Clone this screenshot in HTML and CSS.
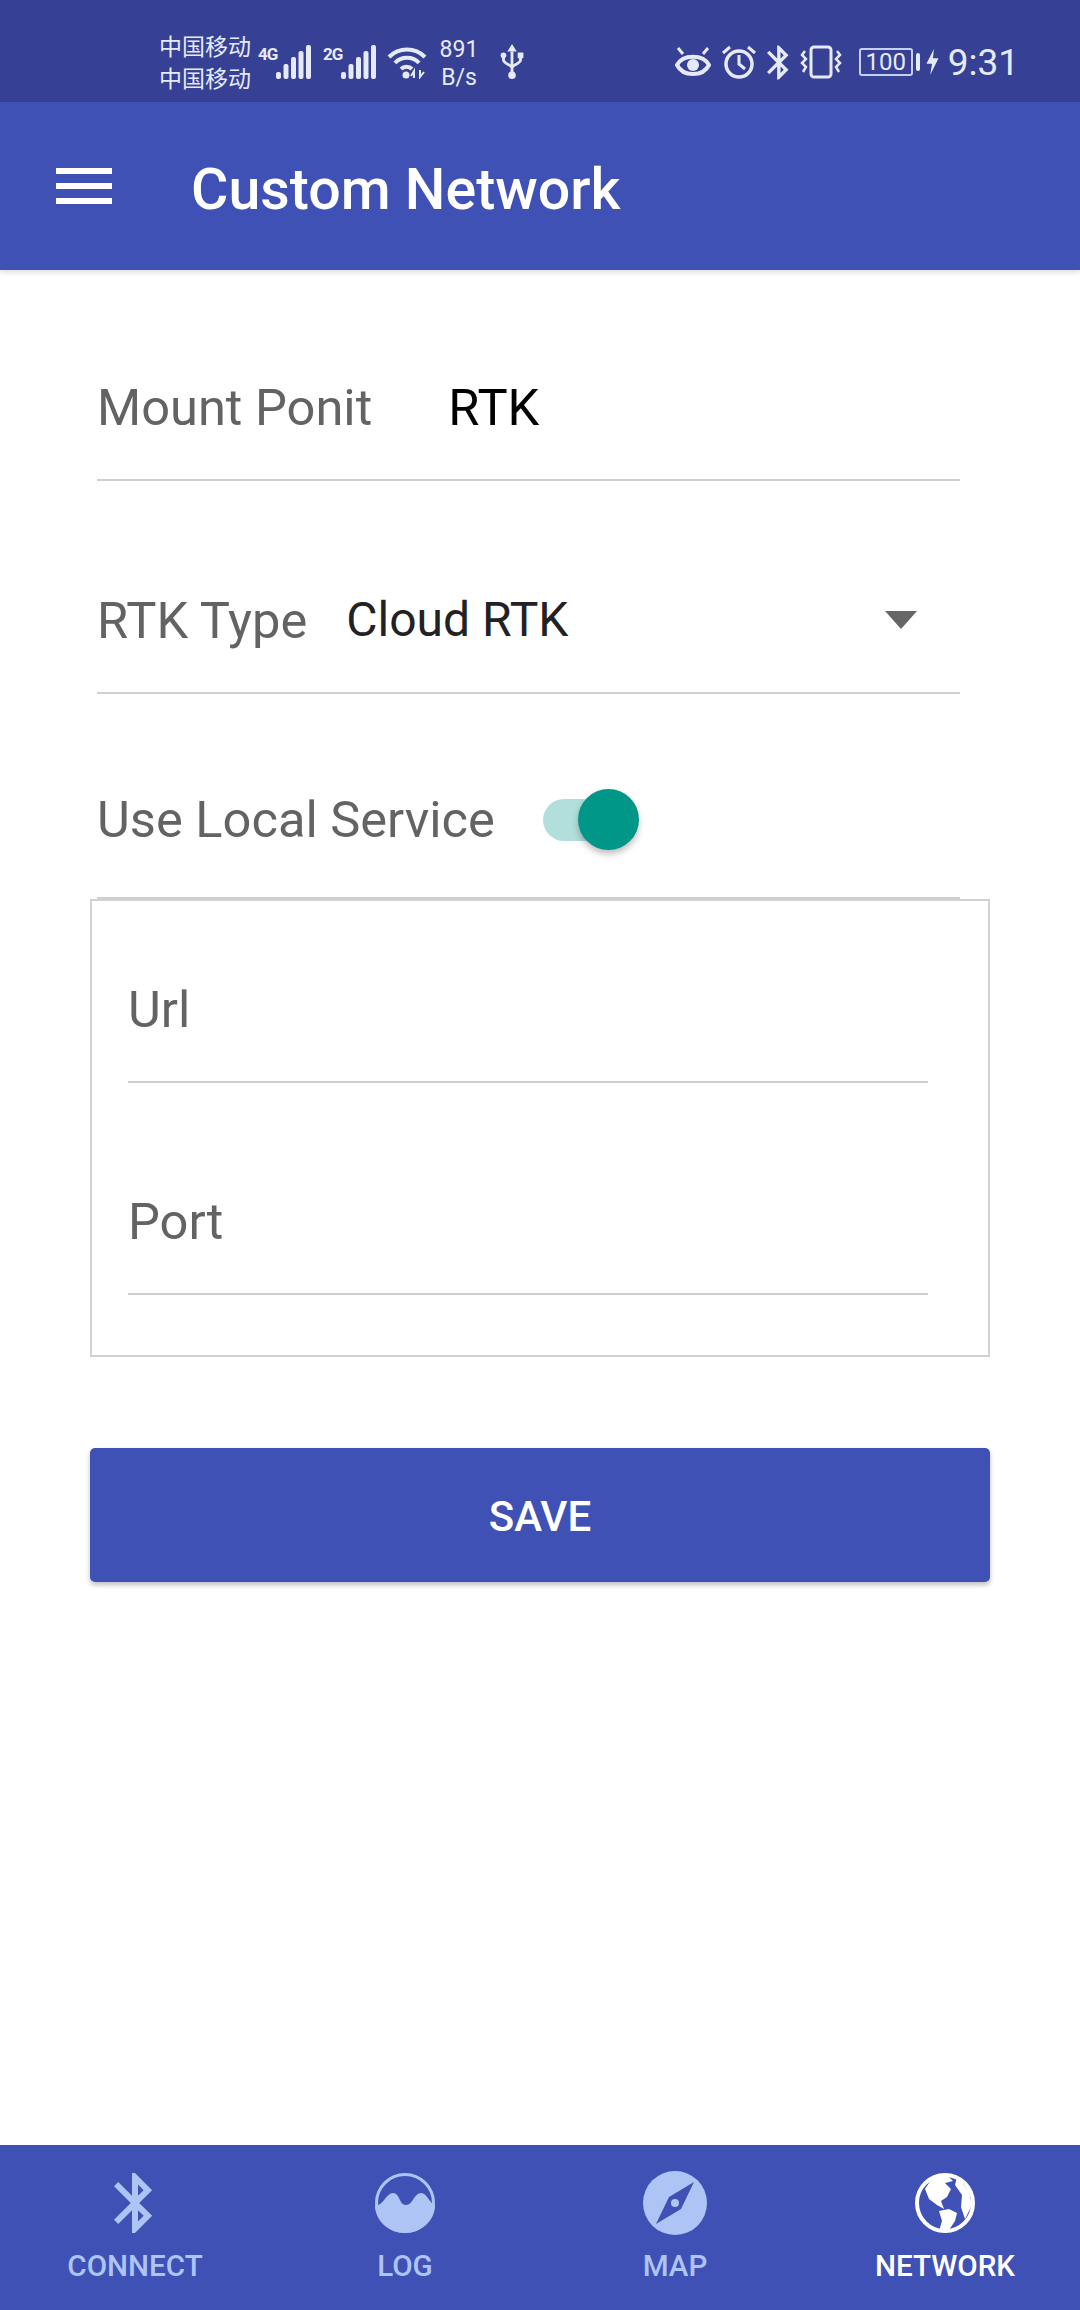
FILE: index.html
```html
<!DOCTYPE html>
<html lang="en">
<head>
    <meta charset="UTF-8">
    <meta name="viewport" content="width=device-width, initial-scale=1.0">
    <title>Custom Network</title>
    <link rel="stylesheet" href="styles.css">
</head>
<body>
    <div class="status-bar">
        <div class="status-left">
            <div class="carriers"><span>中国移动</span><span>中国移动</span></div>
            <div class="signal">
                <span class="net-type">4G</span>
                <svg width="36" height="34" viewBox="0 0 36 34" class="fill-icon"><rect x="0" y="27" width="5" height="7" rx="2"/><rect x="7.5" y="19" width="5" height="15" rx="2"/><rect x="15" y="12" width="5" height="22" rx="2"/><rect x="22.5" y="6" width="5" height="28" rx="2"/><rect x="30" y="0" width="5" height="34" rx="2"/></svg>
            </div>
            <div class="signal">
                <span class="net-type">2G</span>
                <svg width="36" height="34" viewBox="0 0 36 34" class="fill-icon"><rect x="0" y="27" width="5" height="7" rx="2"/><rect x="7.5" y="19" width="5" height="15" rx="2"/><rect x="15" y="12" width="5" height="22" rx="2"/><rect x="22.5" y="6" width="5" height="28" rx="2"/><rect x="30" y="0" width="5" height="34" rx="2"/></svg>
            </div>
            <svg class="wifi" width="40" height="34" viewBox="0 0 40 34" fill="none" stroke="#e6eaf8" stroke-width="4"><path d="M2 12C12 2 28 2 38 12"/><path d="M8 18C14 11 26 11 32 18"/><path d="M14 24C17 21 22 21 25 24"/><circle cx="19" cy="30" r="3.5" fill="#e6eaf8" stroke="none"/><path d="M27 33V26L24 31M33 25V32L37 27" stroke-width="2"/></svg>
            <div class="speed"><span>891</span><span>B/s</span></div>
            <svg class="usb" width="24" height="36" viewBox="0 0 24 38" fill="none" stroke="#e6eaf8" stroke-width="3"><path d="M12 8V32"/><path d="M3 13V17C3 21 12 22 12 25"/><path d="M21 13V17C21 21 12 22 12 25"/><path d="M12 0L17 8H7Z" fill="#e6eaf8" stroke="none"/><circle cx="12" cy="33" r="4" fill="#e6eaf8" stroke="none"/><circle cx="3" cy="12" r="3" fill="#e6eaf8" stroke="none"/><rect x="18" y="9" width="6" height="6" fill="#e6eaf8" stroke="none"/></svg>
        </div>
        <div class="status-right">
            <svg width="36" height="34" viewBox="0 0 36 34" fill="none" stroke="#e6eaf8" stroke-width="4"><path d="M2 20C8 9 28 9 34 20C28 32 8 32 2 20Z"/><circle cx="18" cy="20" r="6" fill="#e6eaf8" stroke="none"/><path d="M3 3L8 9M33 3L28 9" stroke-width="3"/></svg>
            <svg width="34" height="34" viewBox="0 0 34 34" fill="none" stroke="#e6eaf8" stroke-width="3.5"><circle cx="17" cy="19" r="13"/><path d="M17 10V19L23 24" stroke-width="3"/><path d="M1 8L8 2M33 8L26 2" stroke-width="3"/></svg>
            <svg width="22" height="35" viewBox="5 2 13 20" class="fill-icon"><path d="M17.71 7.71L12 2h-1v7.59L6.41 5 5 6.41 10.59 12 5 17.59 6.41 19 11 14.41V22h1l5.71-5.71-4.3-4.29 4.3-4.29zM13 5.83l1.88 1.88L13 9.59V5.83zm1.88 10.46L13 18.17v-3.76l1.88 1.88z"/></svg>
            <svg width="42" height="34" viewBox="0 0 42 34" fill="none" stroke="#e6eaf8" stroke-width="3"><rect x="11" y="2" width="20" height="30" rx="3"/><path d="M5 6L2 10L6 14L2 18L6 22L3 27M37 6L40 10L36 14L40 18L36 22L39 27" stroke-width="2.5"/></svg>
            <div class="battery"><span class="battery-box">100</span><span class="battery-nub"></span></div>
            <svg class="bolt" width="13" height="26" viewBox="0 0 13 28"><path d="M8 0L0 16H6L4 28L13 10H7Z"/></svg>
            <span class="clock">9:31</span>
        </div>
    </div>

    <header class="app-bar">
        <div class="menu-btn"><span></span><span></span><span></span></div>
        <h1>Custom Network</h1>
    </header>

    <main class="form">
        <div class="field">
            <span class="label">Mount Ponit</span>
            <span class="value mount-value">RTK</span>
        </div>
        <div class="field">
            <span class="label">RTK Type</span>
            <span class="value select-value">Cloud RTK</span>
            <span class="arrow"></span>
        </div>
        <div class="field switch-field">
            <span class="label">Use Local Service</span>
            <span class="switch"><span class="track"></span><span class="thumb"></span></span>
        </div>
        <div class="service-box">
            <div class="field"><span class="label">Url</span></div>
            <div class="field"><span class="label">Port</span></div>
        </div>
        <button class="save-btn">SAVE</button>
    </main>

    <nav class="bottom-nav">
        <div class="nav-item">
            <svg width="72" height="72" viewBox="0 0 24 24" fill="#adc4f4"><path d="M17.71 7.71L12 2h-1v7.59L6.41 5 5 6.41 10.59 12 5 17.59 6.41 19 11 14.41V22h1l5.71-5.71-4.3-4.29 4.3-4.29zM13 5.83l1.88 1.88L13 9.59V5.83zm1.88 10.46L13 18.17v-3.76l1.88 1.88z"/></svg>
            <span>CONNECT</span>
        </div>
        <div class="nav-item">
            <svg width="72" height="72" viewBox="0 0 72 72"><circle cx="36" cy="36" r="28.5" fill="none" stroke="#adc4f4" stroke-width="3"/><path d="M6 38C14 40 17 26 24 26C31 26 30 38 37 38C44 38 45 26 52 26C58 26 60 36 66 38C66 54 52 66 36 66C20 66 6 54 6 38Z" fill="#adc4f4"/></svg>
            <span>LOG</span>
        </div>
        <div class="nav-item">
            <svg width="72" height="72" viewBox="0 0 72 72"><circle cx="36" cy="36" r="32" fill="#adc4f4"/><path d="M55 15L42 42L17 57L30 30Z" fill="#3f51b5"/><circle cx="36" cy="36" r="4" fill="#adc4f4"/></svg>
            <span>MAP</span>
        </div>
        <div class="nav-item active">
            <svg width="72" height="72" viewBox="0 0 72 72"><circle cx="36" cy="36" r="28" fill="none" stroke="#fff" stroke-width="4"/><path d="M24 10L38 8L44 14L36 16L42 22L38 30L32 34L35 42L28 38L20 32L16 22ZM48 10L60 24L63 38L56 52L52 40L53 28L46 18ZM30 44L40 42L48 46L46 54L38 66L30 64L33 54Z" fill="#fff"/></svg>
            <span>NETWORK</span>
        </div>
    </nav>
</body>
</html>
```

FILE: styles.css
```css
* {
    box-sizing: border-box;
}
body {
    font-family: Roboto, "Noto Sans CJK SC", sans-serif;
    margin: 0;
    padding: 0;
    width: 1080px;
    height: 2310px;
    display: flex;
    flex-direction: column;
    background-color: #fff;
    overflow: hidden;
}
.fill-icon, .bolt {
    fill: #e6eaf8;
}

/* status bar */
.status-bar {
    height: 102px;
    flex-shrink: 0;
    background-color: #364095;
    color: #e6eaf8;
    display: flex;
    justify-content: space-between;
    align-items: center;
    padding: 22px 61px 0 159px;
}
.status-left, .status-right {
    display: flex;
    align-items: center;
}
.status-right {
    gap: 11px;
}
.carriers, .speed {
    display: flex;
    flex-direction: column;
    margin-top: 4px;
    font-size: 23px;
    line-height: 32px;
}
.signal {
    display: flex;
    height: 34px;
    margin-left: 7px;
}
.signal + .signal {
    margin-left: 11px;
}
.net-type {
    width: 18px;
    font-size: 17px;
    font-weight: 700;
    line-height: 18px;
    letter-spacing: -1px;
}
.wifi {
    margin-left: 10px;
}
.speed {
    width: 40px;
    margin-left: 12px;
    align-items: center;
    font-size: 23px;
    line-height: 28px;
}
.usb {
    margin-left: 21px;
}
.battery {
    display: flex;
    align-items: center;
    margin-left: 6px;
}
.battery-box {
    width: 54px;
    height: 28px;
    border: 2px solid #c6d0f0;
    border-radius: 3px;
    font-size: 24px;
    line-height: 24px;
    text-align: center;
}
.battery-nub {
    width: 4px;
    height: 18px;
    margin-left: 3px;
    background-color: #e6eaf8;
    border-radius: 2px;
}
.bolt {
    margin-left: -5px;
}
.clock {
    font-size: 37px;
    margin-left: -2px;
}

/* app bar */
.app-bar {
    height: 168px;
    flex-shrink: 0;
    background-color: #3f51b5;
    color: #fff;
    display: flex;
    align-items: center;
    padding-left: 56px;
    box-shadow: 0 2px 6px rgba(0, 0, 0, 0.15);
}
.menu-btn {
    width: 56px;
    display: flex;
    flex-direction: column;
    gap: 9px;
}
.menu-btn span {
    height: 6px;
    background-color: #fff;
}
.app-bar h1 {
    margin: 6px 0 0 79px;
    font-size: 57.3px;
    font-weight: 500;
}

/* form */
.form {
    flex: 1;
    padding: 63px 90px 0;
}
.field {
    height: 148px;
    margin: 0 30px 65px 7px;
    padding-top: 2px;
    border-bottom: 2px solid #cfcfcf;
    display: flex;
    align-items: center;
    font-size: 50.6px;
}
.label {
    color: #636363;
}
.value {
    color: #222;
    font-size: 48px;
}
.mount-value {
    margin-left: 76px;
    color: #000;
    font-size: 50.6px;
}
.select-value {
    margin-left: 39px;
    margin-bottom: 2px;
}
.arrow {
    margin-left: auto;
    margin-right: 43px;
    border-left: 16px solid transparent;
    border-right: 16px solid transparent;
    border-top: 18px solid #666;
}
.switch-field {
    height: 151px;
    margin-top: -11px;
    margin-bottom: 0;
    padding-top: 0;
    padding-bottom: 6px;
}
.switch {
    position: relative;
    width: 96px;
    height: 61px;
    margin-left: 48px;
}
.track {
    position: absolute;
    left: 0;
    top: 10px;
    width: 66px;
    height: 42px;
    border-radius: 21px;
    background-color: #b2dfdb;
}
.thumb {
    position: absolute;
    right: 0;
    top: 0;
    width: 61px;
    height: 61px;
    border-radius: 50%;
    background-color: #009688;
    box-shadow: 0 4px 6px rgba(0, 0, 0, 0.25);
}
.service-box {
    height: 458px;
    border: 2px solid #d2d2d2;
    padding-top: 34px;
}
.service-box .field {
    margin: 0 60px 64px 36px;
}
.save-btn {
    display: block;
    width: 100%;
    height: 134px;
    margin-top: 91px;
    padding-top: 3px;
    border: none;
    border-radius: 5px;
    background-color: #3f51b5;
    color: #fff;
    font-family: inherit;
    font-size: 42px;
    font-weight: 500;
    box-shadow: 0 3px 5px rgba(0, 0, 0, 0.25);
}

/* bottom nav */
.bottom-nav {
    height: 165px;
    flex-shrink: 0;
    background-color: #3f51b5;
    display: flex;
    padding-top: 22px;
}
.nav-item {
    flex: 1;
    display: flex;
    flex-direction: column;
    align-items: center;
    color: #adc4f4;
    font-size: 29.6px;
    font-weight: 500;
}
.nav-item span {
    margin-top: 10px;
}
.nav-item.active {
    color: #fff;
}
```
